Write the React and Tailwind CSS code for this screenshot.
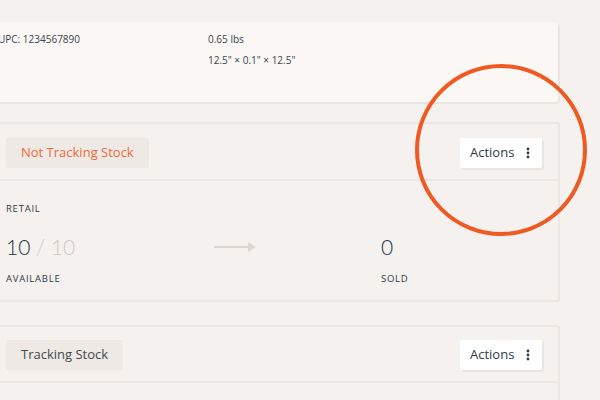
import React from 'react';

const font = { fontFamily: '"Open Sans", "Noto Sans", sans-serif' };
const numFont = { fontFamily: 'Lato, "Open Sans", sans-serif' };

const Dots = () => (
    <svg width="4" height="12" viewBox="0 0 4 12" className="text-[#2d3b45]">
        <circle cx="2" cy="2" r="1.4" fill="currentColor" />
        <circle cx="2" cy="6" r="1.4" fill="currentColor" />
        <circle cx="2" cy="10" r="1.4" fill="currentColor" />
    </svg>
);

const ActionsButton = () => (
    <button className="h-[30px] w-[82px] flex items-center justify-between pl-[10px] pr-[12px] bg-white rounded-[2px] shadow-[2px_2px_0_#ebe5e1] text-[13px] text-[#2d3b45]">
        <span>Actions</span>
        <Dots />
    </button>
);

const Arrow = () => (
    <svg width="42" height="12" viewBox="0 0 42 12">
        <line x1="0" y1="6" x2="34" y2="6" stroke="#ddd5cf" strokeWidth="2" />
        <polygon points="34,1 42,6 34,11" fill="#ddd5cf" />
    </svg>
);

export default function App() {
    return (
        <div className="w-[600px] h-[400px] overflow-hidden bg-[#f5f1ee] relative" style={font}>
            <div className="-ml-[16px] w-[576px] pt-[22px] flex flex-col">
                {/* dimensions card */}
                <div className="h-[80px] mr-[2px] bg-[#faf7f5] rounded-[3px] shadow-[2px_2px_0_#ebe6e2] flex pl-[14px] pt-[10px] text-[10px] text-[#3a454d]">
                    <div className="w-[210px]">UPC: 1234567890</div>
                    <div className="flex flex-col gap-[6px]">
                        <span>0.65 lbs</span>
                        <span>12.5" × 0.1" × 12.5"</span>
                    </div>
                </div>

                {/* not tracking */}
                <div className="mt-[20px] border-2 border-[#ece7e3] rounded-[3px]">
                    <div className="h-[57px] flex items-start justify-between pt-[14px] pl-[20px] pr-[16px] border-b-2 border-[#ece7e3]">
                        <span className="h-[30px] px-[15px] flex items-center bg-[#efe9e5] rounded-[2px] text-[13px] text-[#f06a3a]">
                            Not Tracking Stock
                        </span>
                        <ActionsButton />
                    </div>
                    <div className="h-[119px] pl-[20px] pt-[22px]">
                        <div className="text-[9.5px] leading-[12px] tracking-[0.08em] text-[#2d3b45]">RETAIL</div>
                        <div className="flex items-center mt-[19px]">
                            <div className="w-[208px] text-[21px] font-light text-[#23323c] leading-[26px]" style={numFont}>
                                10 <span className="text-[#cfc8c3]">/ 10</span>
                            </div>
                            <div className="w-[167px] flex items-center">
                                <Arrow />
                            </div>
                            <div className="text-[21px] font-light text-[#23323c] leading-[26px]" style={numFont}>0</div>
                        </div>
                        <div className="flex mt-[13px] text-[9.5px] leading-[12px] tracking-[0.08em] text-[#2d3b45]">
                            <div className="w-[375px]">AVAILABLE</div>
                            <div>SOLD</div>
                        </div>
                    </div>
                </div>

                {/* tracking */}
                <div className="mt-[23px] border-2 border-[#ece7e3] rounded-[3px] h-[120px]">
                    <div className="h-[56px] flex items-start justify-between pt-[13px] pl-[20px] pr-[16px] border-b-2 border-[#ece7e3]">
                        <span className="h-[30px] px-[15px] flex items-center bg-[#efe9e5] rounded-[2px] text-[13px] text-[#3d4a52]">
                            Tracking Stock
                        </span>
                        <ActionsButton />
                    </div>
                </div>
            </div>

            {/* highlight ring */}
            <div className="absolute left-[415px] top-[64px] w-[172px] h-[172px] rounded-full border-[4px] border-[#f05a22]" />
        </div>
    );
}
